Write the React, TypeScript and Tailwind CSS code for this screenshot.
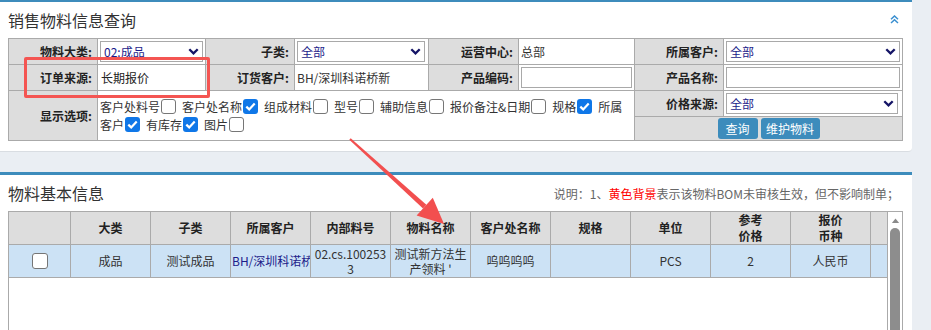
import React from "react";

const NAVY = "text-[#1c1c8a]";

function Chevron() {
  return (
    <svg width="11" height="7" viewBox="0 0 11 7" className="shrink-0">
      <path d="M1.3 1.3 L5.5 5.4 L9.7 1.3" fill="none" stroke="#141466" strokeWidth="2.3" />
    </svg>
  );
}

function SelectBox({ value, cls }: { value: string; cls: string }) {
  return (
    <div className={`${cls} h-[21px] border border-[#a9a9a9] bg-white flex items-center justify-between pl-[3px] pr-[3px] ${NAVY}`}>
      <span className="leading-[19px]">{value}</span>
      <Chevron />
    </div>
  );
}

function InputBox({ cls }: { cls: string }) {
  return <div className={`${cls} h-[21px] border border-[#a9a9a9] bg-white`} />;
}

function Cb({ checked }: { checked?: boolean }) {
  if (checked) {
    return (
      <span className="ml-[1px] mr-[6px] w-[15px] h-[15px] rounded-[3px] bg-[#0f77e8] flex items-center justify-center shrink-0">
        <svg width="11" height="9" viewBox="0 0 11 9">
          <path d="M1.3 4.6 L4.2 7.4 L9.7 1.5" fill="none" stroke="#fff" strokeWidth="2.2" />
        </svg>
      </span>
    );
  }
  return <span className="ml-[1px] mr-[6px] w-[15px] h-[15px] rounded-[3px] border border-[#767676] bg-white shrink-0" />;
}

const labelCls =
  "bg-[#dddddd] border-r border-b border-[#aaa] flex items-center justify-end pr-[5px] font-bold text-[#222]";
const valueCls = "bg-white border-r border-b border-[#aaa] flex items-center pl-[2px]";

function Label({ t, cls = "" }: { t: string; cls?: string }) {
  return <div className={`${labelCls} ${cls}`}>{t}:</div>;
}

const headers: React.ReactNode[] = [
  "",
  "大类",
  "子类",
  "所属客户",
  "内部料号",
  "物料名称",
  "客户处名称",
  "规格",
  "单位",
  <>
    参考
    <br />
    价格
  </>,
  <>
    报价
    <br />
    币种
  </>,
  "",
];

export default function App() {
  return (
    <div className="relative w-[931px] h-[330px] overflow-hidden bg-[#eaeef3] text-[12px] text-[#333] font-['Noto_Sans_CJK_SC','Microsoft_YaHei',sans-serif]">
      {/* Panel 1 */}
      <div className="w-[912px] h-[152px] bg-white border-t-2 border-[#3d8cbc] border-b border-b-[#d9dde2] rounded-br-[4px]">
        <div className="h-[36px] flex items-center justify-between pl-2 pr-[13px]">
          <span className="text-[16px] leading-[20px] text-[#333]">销售物料信息查询</span>
          <svg width="9" height="9" viewBox="0 0 9 9" className="mt-[-1px]">
            <path d="M1 4.3 L4.5 1 L8 4.3 M1 8 L4.5 4.7 L8 8" fill="none" stroke="#3a8fd0" strokeWidth="1.5" />
          </svg>
        </div>
        <div className="ml-2 w-[895px] grid grid-cols-[89px_108px_89px_134px_90px_116px_89px_179px] grid-rows-[26px_26px_26px_24px] border-l border-t border-[#aaa] leading-[16px]">
          {/* row 1 */}
          <Label t="物料大类" />
          <div className={valueCls}>
            <SelectBox value="02:成品" cls="w-[103px]" />
          </div>
          <Label t="子类" />
          <div className={valueCls}>
            <SelectBox value="全部" cls="w-[128px]" />
          </div>
          <Label t="运营中心" />
          <div className={`${valueCls} text-[#333]`}>总部</div>
          <Label t="所属客户" />
          <div className={valueCls}>
            <SelectBox value="全部" cls="w-[174px]" />
          </div>
          {/* row 2 */}
          <Label t="订单来源" />
          <div className={`${valueCls} text-[#222] pl-[3px]`}>长期报价</div>
          <Label t="订货客户" />
          <div className={`${valueCls} text-[#333] whitespace-nowrap`}>BH/深圳科诺桥新</div>
          <Label t="产品编码" />
          <div className={valueCls}>
            <InputBox cls="w-[111px]" />
          </div>
          <Label t="产品名称" />
          <div className={valueCls}>
            <InputBox cls="w-[174px]" />
          </div>
          {/* row 3 */}
          <Label t="显示选项" cls="row-span-2" />
          <div className="col-span-5 row-span-2 bg-white border-r border-b border-[#aaa] flex flex-col justify-center pl-[2px] text-[#333]">
            <div className="flex items-center h-[18px] whitespace-nowrap">
              <span>客户处料号</span>
              <Cb />
              <span>客户处名称</span>
              <Cb checked />
              <span>组成材料</span>
              <Cb />
              <span>型号</span>
              <Cb />
              <span>辅助信息</span>
              <Cb />
              <span>报价备注&amp;日期</span>
              <Cb />
              <span>规格</span>
              <Cb checked />
              <span>所属</span>
            </div>
            <div className="flex items-center h-[18px] whitespace-nowrap">
              <span>客户</span>
              <Cb checked />
              <span>有库存</span>
              <Cb checked />
              <span>图片</span>
              <Cb />
            </div>
          </div>
          <Label t="价格来源" />
          <div className={valueCls}>
            <SelectBox value="全部" cls="w-[172px]" />
          </div>
          {/* row 4 */}
          <div className="col-span-2 bg-[#dddddd] border-r border-b border-[#aaa] flex items-center justify-center gap-[3px]">
            <button className="w-[40px] h-[21px] rounded-[3px] bg-[#3d8cbc] text-white text-[12px] leading-[21px]">查询</button>
            <button className="w-[59px] h-[21px] rounded-[3px] bg-[#3d8cbc] text-white text-[12px] leading-[21px]">维护物料</button>
          </div>
        </div>
      </div>

      {/* Panel 2 */}
      <div className="mt-[20px] w-[912px] h-[200px] bg-white border-t-[3px] border-[#3d8cbc]">
        <div className="h-[36px] flex items-center justify-between pl-2 pr-[13px]">
          <span className="text-[16px] leading-[20px] text-[#333]">物料基本信息</span>
          <span className="text-[12px] text-[#666] mt-[1px]">
            说明：1、<span className="text-[#ff0000]">黄色背景</span>表示该物料BOM未审核生效，但不影响制单；
          </span>
        </div>
        <div className="ml-2 w-[895px] h-[200px] border border-[#aaa] flex">
          <div className="w-[878px] grid grid-cols-[62px_repeat(10,80px)_16px] grid-rows-[33px_33px] content-start leading-[16px]">
            {headers.map((h, i) => (
              <div
                key={"h" + i}
                className={`bg-[#dddddd] border-b border-[#aaa] flex items-center justify-center text-center font-bold text-[#222] ${
                  i < 11 ? "border-r" : ""
                }`}
              >
                {h}
              </div>
            ))}
            <div className="bg-[#cce2f5] border-r border-b border-[#aaa] flex items-center justify-center">
              <span className="w-[16px] h-[16px] rounded-[3px] border border-[#767676] bg-white" />
            </div>
            <div className="bg-[#cce2f5] border-r border-b border-[#aaa] flex items-center justify-center">成品</div>
            <div className="bg-[#cce2f5] border-r border-b border-[#aaa] flex items-center justify-center">测试成品</div>
            <div className={`bg-[#cce2f5] border-r border-b border-[#aaa] flex items-center overflow-hidden whitespace-nowrap pl-[1px] ${NAVY}`}>
              BH/深圳科诺桥新
            </div>
            <div className="bg-[#cce2f5] border-r border-b border-[#aaa] flex items-center justify-center text-center break-all leading-[15px] px-[1px]">
              02.cs.1002533
            </div>
            <div className="bg-[#cce2f5] border-r border-b border-[#aaa] flex items-center justify-center text-center leading-[15px] px-[1px]">
              测试新方法生产领料 '
            </div>
            <div className="bg-[#cce2f5] border-r border-b border-[#aaa] flex items-center justify-center">呜呜呜呜</div>
            <div className="bg-[#cce2f5] border-r border-b border-[#aaa]" />
            <div className="bg-[#cce2f5] border-r border-b border-[#aaa] flex items-center justify-center">PCS</div>
            <div className="bg-[#cce2f5] border-r border-b border-[#aaa] flex items-center justify-center">2</div>
            <div className="bg-[#cce2f5] border-r border-b border-[#aaa] flex items-center justify-center">人民币</div>
            <div className="bg-[#cce2f5] border-b border-[#aaa]" />
          </div>
          <div className="w-[15px] border-l border-[#aaa] bg-white flex flex-col items-center">
            <svg width="9" height="6" viewBox="0 0 9 6" className="mt-[6px]">
              <path d="M4.5 0.5 L8.5 5.5 L0.5 5.5 Z" fill="#8a8a8a" />
            </svg>
            <div className="mt-[5px] w-[10px] h-[200px] rounded-t-[5px] bg-[#8d8d8d]" />
          </div>
        </div>
      </div>

      {/* annotations */}
      <div className="absolute left-[24px] top-[57px] w-[186px] h-[41px] border-[3px] border-[#f45552] rounded-[2px] pointer-events-none" />
      <svg className="absolute left-0 top-0 pointer-events-none" width="931" height="330" viewBox="0 0 931 330">
        <polygon points="349.3,139.7 350.7,138.3 426.4,204.7 423.0,208.5" fill="#f24f4f" />
        <polygon points="444,224 416.6,215.5 432.8,197.7" fill="#f24f4f" />
      </svg>
    </div>
  );
}
